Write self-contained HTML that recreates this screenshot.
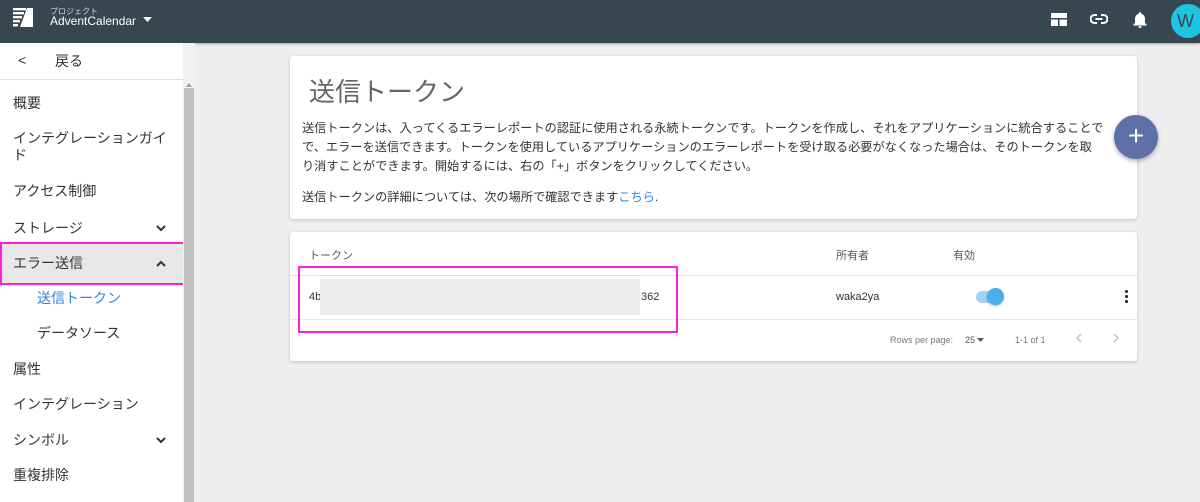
<!DOCTYPE html>
<html><head><meta charset="utf-8"><style>
*{box-sizing:border-box;margin:0;padding:0}
body{width:1200px;height:502px;overflow:hidden;background:#eeeeee;font-family:"Liberation Sans","Noto Sans CJK JP",sans-serif;color:#333;position:relative}
.top{position:absolute;left:0;top:0;width:1200px;height:43px;background:#37474f;box-shadow:0 1px 3px rgba(0,0,0,.3)}
.side{position:absolute;left:0;top:43px;width:183px;height:459px;background:#fff}
.sb{position:absolute;left:183px;top:43px;width:12px;height:459px;background:#f1f1f1}
.it{position:absolute;left:13px;font-size:14px;color:#333;line-height:17px}
.chev{position:absolute;left:156px}
.card{position:absolute;background:#fff;border-radius:3px;box-shadow:0 1px 3px rgba(0,0,0,.2)}
.d{position:absolute;left:12px;font-size:12.2px;color:#333;white-space:nowrap;line-height:19px}
</style></head><body>
<div class="top">
<svg style="position:absolute;left:13px;top:8px" width="20" height="19" viewBox="0 0 20 19"><g fill="#fff"><rect x="0" y="0" width="13" height="2.4"/><rect x="0" y="4" width="11" height="2.4"/><rect x="0" y="8" width="9" height="2.4"/><rect x="0" y="12" width="7" height="2.4"/><rect x="0" y="16" width="5" height="2.4"/><polygon points="14,0 20,0 20,19 7,19"/></g></svg>
<div style="position:absolute;left:50px;top:6px;font-size:8px;color:#cfd8dc">プロジェクト</div>
<div style="position:absolute;left:50px;top:14px;font-size:12px;color:#fff">AdventCalendar</div>
<svg style="position:absolute;left:143px;top:17px" width="9" height="5"><polygon points="0,0 9,0 4.5,5" fill="#fff"/></svg>
<svg style="position:absolute;left:1051px;top:13px" width="16" height="13"><rect width="16" height="13" fill="#fff"/><rect x="0" y="5" width="16" height="1.5" fill="#37474f"/><rect x="7" y="5" width="1.5" height="8" fill="#37474f"/></svg>
<svg style="position:absolute;left:1090px;top:12px" width="18" height="14" viewBox="0 0 18 14"><path d="M7 3H4.5a4 4 0 000 8H7M11 3h2.5a4 4 0 010 8H11M5.5 7h7" stroke="#fff" stroke-width="2" fill="none"/></svg>
<svg style="position:absolute;left:1133px;top:11px" width="14" height="17" viewBox="0 0 14 17"><path d="M7 1a1.2 1.2 0 011.2 1.2v.6A5 5 0 0112 7.6V12l1.6 1.6V14.5H.4v-.9L2 12V7.6a5 5 0 013.8-4.8v-.6A1.2 1.2 0 017 1zM5.3 15.3h3.4A1.7 1.7 0 017 17a1.7 1.7 0 01-1.7-1.7z" fill="#fff"/></svg>
<div style="position:absolute;left:1171px;top:4px;width:34px;height:34px;border-radius:50%;background:#1cc6e0;color:#37474f;font-size:18px;line-height:34px;padding-left:6px">W</div>
</div>
<div class="side">
<div class="it" style="left:18px;top:9px">&lt;</div>
<div class="it" style="left:55px;top:10px">戻る</div>
<div style="position:absolute;left:0;top:36px;width:183px;height:1px;background:#e0e0e0"></div>
<div class="it" style="top:52px">概要</div>
<div class="it" style="top:87px">インテグレーションガイ<br>ド</div>
<div class="it" style="top:140px">アクセス制御</div>
<div class="it" style="top:177px">ストレージ</div>
<svg class="chev" style="top:182px" width="10" height="7"><path d="M1 1l4 4 4-4" stroke="#333" stroke-width="2" fill="none"/></svg>
<div style="position:absolute;left:0;top:199px;width:185px;height:43px;background:#e8e8e8;border:2px solid #ff1fd8"></div>
<div class="it" style="top:212px">エラー送信</div>
<svg class="chev" style="top:217px" width="10" height="7"><path d="M1 6l4-4 4 4" stroke="#333" stroke-width="2" fill="none"/></svg>
<div class="it" style="left:37px;top:247px;color:#2a86e8">送信トークン</div>
<div class="it" style="left:37px;top:282px">データソース</div>
<div class="it" style="top:318px">属性</div>
<div class="it" style="top:353px">インテグレーション</div>
<div class="it" style="top:389px">シンボル</div>
<svg class="chev" style="top:394px" width="10" height="7"><path d="M1 1l4 4 4-4" stroke="#333" stroke-width="2" fill="none"/></svg>
<div class="it" style="top:424px">重複排除</div>
</div>
<div class="sb"><div style="position:absolute;left:1px;top:45px;width:10px;height:414px;background:#c1c1c1"></div><svg style="position:absolute;left:3px;top:40px" width="6" height="4"><polygon points="0,4 6,4 3,0" fill="#a0a0a0"/></svg></div>
<div class="card" style="left:290px;top:56px;width:847px;height:163px">
<div style="position:absolute;left:19px;top:16px;font-size:26px;color:#666">送信トークン</div>
<div class="d" style="top:63px">送信トークンは、入ってくるエラーレポートの認証に使用される永続トークンです。トークンを作成し、それをアプリケーションに統合することで</div>
<div class="d" style="top:82px">で、エラーを送信できます。トークンを使用しているアプリケーションのエラーレポートを受け取る必要がなくなった場合は、そのトークンを取</div>
<div class="d" style="top:101px">り消すことができます。開始するには、右の「+」ボタンをクリックしてください。</div>
<div class="d" style="top:132px">送信トークンの詳細については、次の場所で確認できます<span style="color:#2a86e8">こちら</span>.</div>
</div>
<div style="position:absolute;left:1114px;top:115px;width:44px;height:44px;border-radius:50%;background:#5f6fa8;box-shadow:0 2px 5px rgba(0,0,0,.3);color:#fff;font-size:28px;line-height:42px;text-align:center">+</div>
<div class="card" style="left:290px;top:232px;width:847px;height:129px">
<div style="position:absolute;left:19px;top:15px;font-size:11px;color:#555">トークン</div>
<div style="position:absolute;left:546px;top:15px;font-size:11px;color:#555">所有者</div>
<div style="position:absolute;left:663px;top:15px;font-size:11px;color:#555">有効</div>
<div style="position:absolute;left:0;top:43px;width:847px;height:1px;background:#e0e0e0"></div>
<div style="position:absolute;left:19px;top:59px;font-size:11px;color:#333">4b</div>
<div style="position:absolute;left:30px;top:47px;width:320px;height:36px;background:#ececec"></div>
<div style="position:absolute;left:351px;top:59px;font-size:11px;color:#333">362</div>
<div style="position:absolute;left:546px;top:59px;font-size:11px;color:#333">waka2ya</div>
<div style="position:absolute;left:686px;top:59px;width:24px;height:12px;border-radius:6px;background:#9fd3f3"></div>
<div style="position:absolute;left:697px;top:56px;width:17px;height:17px;border-radius:50%;background:#4aaee8;box-shadow:0 1px 2px rgba(0,0,0,.3)"></div>
<div style="position:absolute;left:835px;top:57px;width:3px;height:14px;background:radial-gradient(circle,#222 1.4px,transparent 1.6px) 0 0/3px 5px"></div>
<div style="position:absolute;left:0;top:87px;width:847px;height:1px;background:#e8e8e8"></div>
<div style="position:absolute;left:600px;top:103px;font-size:9px;color:#777">Rows per page:</div>
<div style="position:absolute;left:675px;top:103px;font-size:9px;color:#555">25</div>
<svg style="position:absolute;left:687px;top:106px" width="7" height="4"><polygon points="0,0 7,0 3.5,4" fill="#555"/></svg>
<div style="position:absolute;left:725px;top:103px;font-size:9px;color:#777">1-1 of 1</div>
<svg style="position:absolute;left:786px;top:101px" width="6" height="10"><path d="M5 1L1 5l4 4" stroke="#bbb" stroke-width="1.3" fill="none"/></svg>
<svg style="position:absolute;left:823px;top:101px" width="6" height="10"><path d="M1 1l4 4-4 4" stroke="#bbb" stroke-width="1.3" fill="none"/></svg>
</div>
<div style="position:absolute;left:298px;top:266px;width:380px;height:67px;border:2px solid #ff1fd8"></div>
</body></html>
